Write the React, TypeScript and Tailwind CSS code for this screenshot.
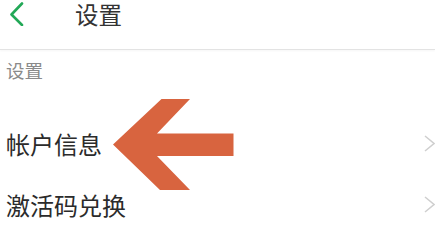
import React from "react";

const font = { fontFamily: '"Noto Sans CJK SC", "Noto Sans", sans-serif' };

function RightChevron() {
  return (
    <svg width="11" height="17" viewBox="0 0 11 17" className="shrink-0">
      <polyline points="1,1 10,8.5 1,16" fill="none" stroke="#cfcfcf" strokeWidth="1.5" strokeLinejoin="miter" />
    </svg>
  );
}

function Row({ label }: { label: string }) {
  return (
    <div className="flex h-[61px] items-center justify-between pl-[6px]">
      <span className="text-[24px] leading-[30px] text-[#2b2b2b]">{label}</span>
      <RightChevron />
    </div>
  );
}

export default function App() {
  return (
    <div className="relative h-[237px] w-[435px] overflow-hidden bg-white" style={font}>
      <div className="flex h-[50px] items-start border-b border-[#e3e3e3] shadow-[0_1px_2px_rgba(0,0,0,0.04)]">
        <svg width="16" height="24" viewBox="0 0 16 24" className="ml-[9px] mt-[2px] shrink-0">
          <polyline points="13,1.5 2.5,12.5 13,23" fill="none" stroke="#22a857" strokeWidth="2.6" strokeLinecap="round" strokeLinejoin="round" />
        </svg>
        <span className="ml-[50px] pt-[0px] text-[23.5px] leading-[29px] text-[#333333]">设置</span>
      </div>
      <div className="h-[63px] pl-[6px] pt-[8px]">
        <span className="text-[18.5px] leading-[24px] text-[#8a8a8a]">设置</span>
      </div>
      <Row label="帐户信息" />
      <Row label="激活码兑换" />
      <svg className="pointer-events-none absolute left-0 top-0" width="435" height="237" viewBox="0 0 435 237">
        <polygon
          points="113,144.5 161.5,99 190,99 157,133.5 233.5,133.5 233.5,156 157,156 190,190 160,190"
          fill="#d8643f"
        />
      </svg>
    </div>
  );
}
